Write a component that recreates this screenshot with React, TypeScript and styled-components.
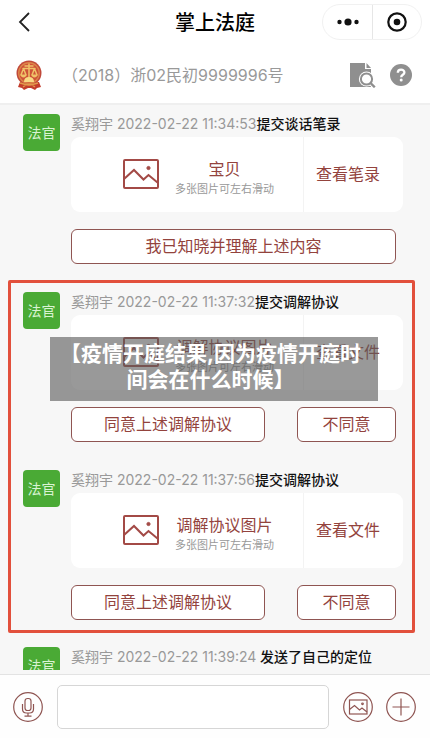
import React from "react";
import styled, { createGlobalStyle } from "styled-components";

const maroon = "#93433d";
const line = "#8f5552";

const GlobalStyle = createGlobalStyle`
  * { box-sizing: border-box; }
  body {
    margin: 0;
    background: #f7f7f7;
    font-family: Inter, "Noto Sans CJK SC", sans-serif;
  }
  button, input { font: inherit; color: inherit; }
  button { cursor: pointer; padding: 0; border: 0; background: none; }
  h1, p { margin: 0; font-weight: 400; }
`;

const Page = styled.div`
  position: relative;
  display: flex;
  flex-direction: column;
  height: 100vh;
`;

const TopBar = styled.header`
  display: grid;
  grid-template-columns: 100px 1fr 100px;
  align-items: center;
  flex: none;
  height: 44px;
  padding: 0 8px;
  background: #fff;
`;

const BackButton = styled.button`
  display: flex;
  width: 32px;
  height: 32px;
  align-items: center;
  justify-content: center;
`;

const Title = styled.h1`
  && { font-weight: 500; }
  padding-top: 2px;
  font-size: 20px;
  line-height: 28px;
  text-align: center;
`;

const Capsule = styled.div`
  display: flex;
  height: 36px;
  border: 1px solid #f1f1f1;
  border-radius: 18px;
`;

const CapsuleButton = styled.button`
  display: flex;
  flex: 1;
  align-items: center;
  justify-content: center;
  & + & { box-shadow: inset 1px 0 #e6e6e6; }
`;

const CaseBar = styled.section`
  display: flex;
  flex: none;
  align-items: center;
  height: 61px;
  padding: 2px 18px 0 14px;
  border-bottom: 2px solid #efefef;
  background: #fff;
`;

const CaseNumber = styled.p`
  flex: 1;
  padding-left: 18px;
  color: #999;
  font-size: 16px;
  line-height: 24px;
`;

const CaseTools = styled.div`
  display: flex;
  align-items: center;
  gap: 14px;
`;

const IconButton = styled.button`
  display: flex;
`;

const Chat = styled.main`
  flex: 1;
  min-height: 0;
  overflow: hidden;
`;

const Highlight = styled.section`
  margin: 0 15px 14px 8px;
  padding: 9px 9px 10px 12px;
  border: 3px solid #e2503c;
  border-radius: 2px;
`;

const Message = styled.article`
  display: grid;
  grid-template-columns: 37px 1fr;
  column-gap: 11px;
  & + & { margin-top: 28px; }
`;

const Group = styled.section`
  padding: 9px 27px 16px 23px;
  ${Highlight} + & { padding-top: 0; }
`;

const Avatar = styled.div`
  height: 37px;
  border-radius: 4px;
  background: #4aaa35;
  color: #d9f3d2;
  font-size: 14px;
  line-height: 38px;
  text-align: center;
`;

const Meta = styled.p`
  color: #999;
  font-size: 14px;
  line-height: 20px;
  white-space: nowrap;
`;

const Action = styled.span`
  color: #111;
  font-weight: 500;
`;

const Card = styled.div`
  display: grid;
  grid-template-columns: 1fr 100px;
  height: 75px;
  margin-top: 3px;
  border-radius: 9px;
  background: #fff;
`;

const Attachment = styled.div`
  display: flex;
  align-items: center;
  gap: 16px;
  padding: 0 0 2px 52px;
`;

const FileText = styled.div`
  padding-top: 9px;
  text-align: center;
`;

const FileName = styled.p`
  color: ${maroon};
  font-size: 16px;
  line-height: 22px;
`;

const FileHint = styled.p`
  color: #999;
  font-size: 11px;
  line-height: 18px;
  white-space: nowrap;
`;

const ViewButton = styled.button`
  && {
    padding: 0 0 4px 12px;
    border-left: 1px solid #f3f3f3;
    color: ${maroon};
    font-size: 16px;
    text-align: left;
  }
`;

const Replies = styled.div`
  display: flex;
  gap: 32px;
  margin: 17px 7px 0 0;
`;

const ReplyButton = styled.button<{ $short?: boolean }>`
  && {
    flex: ${(p) => (p.$short ? "0 0 99px" : "1")};
    height: 35px;
    padding-bottom: 3px;
    border: 1px solid ${line};
    border-radius: 6px;
    background: #fff;
    color: ${maroon};
    font-size: 16px;
  }
`;

const Composer = styled.footer`
  display: flex;
  flex: none;
  align-items: center;
  gap: 13px;
  height: 64px;
  margin-top: 4px;
  padding: 0 14px 0 13px;
  border-top: 1px solid #e3e3e3;
  background: #fefefe;
`;

const TextBox = styled.input`
  flex: 1;
  min-width: 0;
  height: 44px;
  margin: 0 1px;
  padding: 0 10px;
  border: 1px solid #d6d6d6;
  border-radius: 5px;
  background: #fff;
`;

const Caption = styled.aside`
  position: absolute;
  inset: 0 52px 0 50px;
  height: 64px;
  margin: auto 0;
  padding: 4px 12px 8px 5px;
  background: rgba(90, 90, 90, 0.62);
  color: #fff;
  font-size: 21px;
  font-weight: 700;
  line-height: 26px;
  text-align: center;
`;

const Emblem = () => (
  <svg width="30" height="32" viewBox="0 0 30 32" aria-label="法院">
    <path d="M6 23 4 28l4 1 2 2 4-2h3l4 2 2-2 4-1-2-5z" fill="#c33c2c" />
    <circle cx="15" cy="14" r="12.5" fill="#c0493a" />
    <circle cx="15" cy="14" r="10.3" fill="#cf5238" stroke="#dc8449" strokeWidth="1.4" />
    <g fill="none" stroke="#efc268" strokeWidth="1.5" strokeLinecap="round">
      <path d="M15 5v16M9 9.500h12M11 7h8M9.500 9.500 7 16M9.500 9.500l2.500 6.500M20.500 9.500 18 16M20.500 9.500 23 16" />
    </g>
    <path d="M6.500 15.500h6q-.5 3-3 3t-3-3zM17.500 15.500h6q-.5 3-3 3t-3-3z" fill="#efc268" />
    <path d="M10 23q0-5 5-5t5 5z" fill="#f8d984" />
    <path d="M6 24q9 3.500 18 0M9 28l3-2h6l3 2" fill="none" stroke="#e29a4c" strokeWidth="1.400" />
  </svg>
);

const Picture = () => (
  <svg width="36" height="30" viewBox="0 0 36 30" fill="none" stroke="#a34a46" strokeWidth="2" aria-hidden="true">
    <rect x="1" y="1" width="34" height="28" rx="1" />
    <path d="m1 20 10-9 9.500 9.500 5-4.500 9 7.500" />
    <circle cx="25.500" cy="9" r="1.600" fill="#a34a46" strokeWidth="1" />
  </svg>
);

const Round = ({ children }: { children: React.ReactNode }) => (
  <svg width="30" height="30" viewBox="0 0 30 30" fill="none" stroke={line} strokeWidth="1.200" aria-hidden="true">
    <circle cx="15" cy="15" r="14.300" />
    {children}
  </svg>
);

type EntryData = {
  time: string;
  action: string;
  file?: string;
  view?: string;
  replies?: string[];
};

const first: EntryData = {
  time: "11:34:53",
  action: "提交谈话笔录",
  file: "宝贝",
  view: "查看笔录",
  replies: ["我已知晓并理解上述内容"],
};
const mediation: EntryData[] = ["11:37:32", "11:37:56"].map((time) => ({
  time,
  action: "提交调解协议",
  file: "调解协议图片",
  view: "查看文件",
  replies: ["同意上述调解协议", "不同意"],
}));
const last: EntryData = { time: "11:39:24", action: " 发送了自己的定位" };

const Entry = ({ entry }: { entry: EntryData }) => (
  <Message>
    <Avatar>法官</Avatar>
    <div>
      <Meta>
        奚翔宇 2022-02-22 {entry.time}
        <Action>{entry.action}</Action>
      </Meta>
      {entry.file && (
        <Card>
          <Attachment>
            <Picture />
            <FileText>
              <FileName>{entry.file}</FileName>
              <FileHint>多张图片可左右滑动</FileHint>
            </FileText>
          </Attachment>
          <ViewButton>{entry.view}</ViewButton>
        </Card>
      )}
      {entry.replies && (
        <Replies>
          {entry.replies.map((reply, i) => (
            <ReplyButton key={reply} $short={i > 0}>
              {reply}
            </ReplyButton>
          ))}
        </Replies>
      )}
    </div>
  </Message>
);

export default function App() {
  return (
    <Page>
      <GlobalStyle />
      <TopBar>
        <BackButton aria-label="返回">
          <svg width="12" height="20" viewBox="0 0 12 20" fill="none" stroke="#222" strokeWidth="1.800">
            <path d="m11 1-9 9 9 9" />
          </svg>
        </BackButton>
        <Title>掌上法庭</Title>
        <Capsule>
          <CapsuleButton aria-label="更多">
            <svg width="22" height="8" viewBox="0 0 22 8" fill="#111">
              <circle cx="2.500" cy="4" r="2.200" />
              <circle cx="11" cy="4" r="3.600" />
              <circle cx="19.500" cy="4" r="2.200" />
            </svg>
          </CapsuleButton>
          <CapsuleButton aria-label="关闭">
            <svg width="20" height="20" viewBox="0 0 20 20">
              <circle cx="10" cy="10" r="8.700" fill="none" stroke="#111" strokeWidth="2.200" />
              <circle cx="10" cy="10" r="3.300" fill="#111" />
            </svg>
          </CapsuleButton>
        </Capsule>
      </TopBar>
      <CaseBar>
        <Emblem />
        <CaseNumber>（2018）浙02民初9999996号</CaseNumber>
        <CaseTools>
          <IconButton aria-label="查看卷宗">
            <svg width="27" height="26" viewBox="0 0 27 26">
              <path d="M1 1h15v6h6v18H1z" fill="#8f8f8f" />
              <path d="M17.500 1v5H22z" fill="#8f8f8f" />
              <circle cx="17.500" cy="17" r="7.600" fill="#fff" />
              <path d="m21 20 5 5" stroke="#fff" strokeWidth="5" />
              <circle cx="17.500" cy="17" r="5.600" fill="none" stroke="#8f8f8f" strokeWidth="2" />
              <path d="m21.500 21 4.300 4.300" stroke="#8f8f8f" strokeWidth="2.400" />
            </svg>
          </IconButton>
          <IconButton aria-label="帮助">
            <svg width="22" height="22" viewBox="0 0 22 22">
              <circle cx="11" cy="11" r="11" fill="#8f8f8f" />
              <path d="M7.800 8.800c0-4.200 6.600-4 6.600-.3 0 2.300-3.200 2.300-3.200 4.700" fill="none" stroke="#fff" strokeWidth="2.300" />
              <circle cx="11.200" cy="16" r="1.500" fill="#fff" />
            </svg>
          </IconButton>
        </CaseTools>
      </CaseBar>
      <Chat>
        <Group>
          <Entry entry={first} />
        </Group>
        <Highlight>
          {mediation.map((entry) => (
            <Entry key={entry.time} entry={entry} />
          ))}
        </Highlight>
        <Group>
          <Entry entry={last} />
        </Group>
      </Chat>
      <Composer>
        <IconButton aria-label="语音">
          <Round>
            <rect x="12" y="6.500" width="6" height="12" rx="2.500" />
            <path d="M9.500 12v5q0 4 4 4h3q4 0 4-4v-5M15 21v3M11.500 24.200h7" />
          </Round>
        </IconButton>
        <TextBox aria-label="消息" />
        <IconButton aria-label="图片">
          <Round>
            <rect x="6.500" y="8" width="17.500" height="14" />
            <path d="m6.500 17.500 5-4 5 4.500 2.500-2 5 4" />
            <circle cx="19.500" cy="11.800" r=".8" />
          </Round>
        </IconButton>
        <IconButton aria-label="添加">
          <Round>
            <path d="M15 6.500v17M6.500 15h17" />
          </Round>
        </IconButton>
      </Composer>
      <Caption>【疫情开庭结果,因为疫情开庭时间会在什么时候】</Caption>
    </Page>
  );
}
